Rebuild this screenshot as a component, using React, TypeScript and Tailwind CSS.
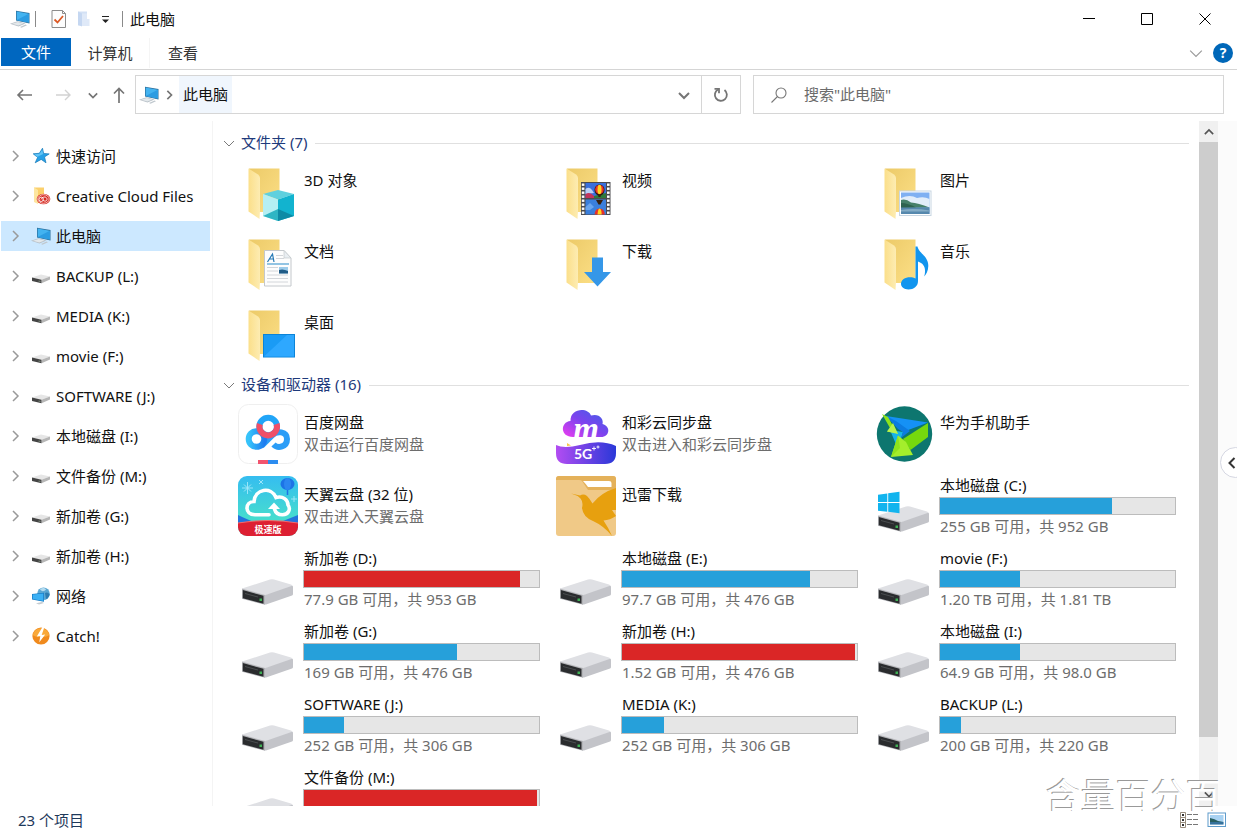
import React, { useState } from "react";

type IconProps = { className?: string };

/* ---------- small glyphs ---------- */

function Chevron({ dir, className = "" }: { dir: "right" | "down" | "up" | "left"; className?: string }) {
  const d = {
    right: "M4 1 L9 6 L4 11",
    down: "M1 4 L6 9 L11 4",
    up: "M1 8.500 L6 3.500 L11 8.500",
    left: "M8.500 1 L3.500 6 L8.500 11",
  }[dir];
  return (
    <svg viewBox="0 0 12 12" fill="none" stroke="currentColor" className={className} aria-hidden="true">
      <path d={d} />
    </svg>
  );
}

function PcIcon({ className = "" }: IconProps) {
  return (
    <svg viewBox="0 0 20 18" className={className} aria-hidden="true">
      <path d="M6 0.700 L19.500 3 V13.500 L6 10.500 Z" fill="#2a6f9c" />
      <path d="M6.700 1.600 L18.800 3.700 V12.500 L6.700 9.900 Z" fill="#43b3f0" />
      <path d="M6.700 9.900 L18.800 3.700 V12.500 Z" fill="#2c9ce2" />
      <path d="M0 13.700 L7.500 11.300 L15.500 13.400 L8.500 16.400 Z" fill="#b9c1c8" />
      <path d="M2 13.700 L7.700 12 L13.500 13.500 L8.300 15.500 Z" fill="#e3e8eb" />
      <path d="M10 17 L15.500 14.500 L17 15.200 L11.500 17.700 Z" fill="#c0c8ce" />
    </svg>
  );
}

function StarIcon({ className = "" }: IconProps) {
  return (
    <svg viewBox="0 0 20 18" className={className} aria-hidden="true">
      <path
        d="M11.500 1.200 L12.600 6.400 L18.200 6.900 L13.500 9.900 L15 15.800 L10.200 12.400 L4.200 15.800 L6.600 10.400 L2.200 6.800 L8.300 6.300 Z"
        fill="#27a0e6"
        stroke="#1478b8"
        strokeWidth="0.700"
      />
      <path d="M11.300 2.700 L12.100 7 L6 10.100 L3.500 7.300 L8.600 6.800 Z" fill="#5fc3f5" />
    </svg>
  );
}

function CloudFilesIcon({ className = "" }: IconProps) {
  return (
    <svg viewBox="0 0 20 18" className={className} aria-hidden="true">
      <path d="M3 0.500 H13 V16 H7 Z" fill="#fbd06c" />
      <path d="M3 0.500 L7 3 V17 L3 15 Z" fill="#fde6a0" />
      <ellipse cx="12.500" cy="12" rx="6.800" ry="5.300" fill="#d6281f" />
      <ellipse cx="12.500" cy="12" rx="5.700" ry="4.300" fill="none" stroke="#fff" strokeWidth="0.700" />
      <circle cx="10.200" cy="12.300" r="2.200" fill="none" stroke="#fff" strokeWidth="0.900" />
      <path d="M10 12.300 C12 9 16 9.500 16 12.300 C16 14.800 12.700 14.500 11.300 12.600" fill="none" stroke="#fff" strokeWidth="0.900" />
    </svg>
  );
}

function SmallDriveIcon({ className = "" }: IconProps) {
  return (
    <svg viewBox="0 0 20 18" className={className} aria-hidden="true">
      <path d="M1 10.500 L10 7.500 L19 9.500 L10.500 12.800 Z" fill="#e6e6e6" />
      <path d="M10.500 12.800 L19 9.500 V12.500 L10.500 16.300 Z" fill="#b6b6b6" />
      <path d="M1 10.500 L10.500 12.800 V16.300 L1 14 Z" fill="#444" />
      <path d="M7.500 13.600 L9.500 14.100 V15 L7.500 14.500 Z" fill="#7d8b7d" />
    </svg>
  );
}

function NetworkIcon({ className = "" }: IconProps) {
  return (
    <svg viewBox="0 0 20 18" className={className} aria-hidden="true">
      <circle cx="12.500" cy="6.800" r="6.300" fill="#5aa6d2" />
      <path d="M9 2 C12 0.500 14 1 15 2.500 C13 5 10 4.500 9 2 Z" fill="#b5dcf0" />
      <path d="M14 6 C16 4.500 18 6 18.700 7.500 C18 10 16.500 11.500 15 12 Z" fill="#2f7cb0" />
      <path d="M1 7 L13 5.800 V14.800 L1 12.500 Z" fill="#1779c2" />
      <path d="M1.700 7.600 L12.300 6.600 V13.900 L1.700 11.900 Z" fill="#3bb0f4" />
      <path d="M5 16.300 L11 15 L13 15.900 L8 17.500 Z" fill="#c4cbd0" />
    </svg>
  );
}

function CatchIcon({ className = "" }: IconProps) {
  return (
    <svg viewBox="0 0 20 18" className={className} aria-hidden="true">
      <circle cx="10" cy="9" r="8.600" fill="#f08a1d" />
      <path d="M1.600 8 A8.600 8.600 0 0 1 18.400 8 C14 11 6 11 1.600 8 Z" fill="#f9a93a" />
      <path d="M11.500 0 L5.800 9.600 L9.300 9 L8.300 15.300 L14.200 7.400 L10.700 8 L13.300 0.200 Z" fill="#fff" />
    </svg>
  );
}

/* ---------- 60px tile icons ---------- */

function Tile({ children }: { children: React.ReactNode }) {
  return (
    <svg viewBox="0 0 60 60" className="size-[60px] shrink-0" aria-hidden="true">
      {children}
    </svg>
  );
}

function FolderIcon({ children }: { children: React.ReactNode }) {
  return (
    <Tile>
      <defs>
        <linearGradient id="folderBack" x1="0" y1="0" x2="1" y2="1">
          <stop offset="0" stopColor="#ecca68" />
          <stop offset="1" stopColor="#fcdf86" />
        </linearGradient>
        <linearGradient id="folderFlap" x1="0" y1="0" x2="1" y2="0">
          <stop offset="0" stopColor="#fbdf8a" />
          <stop offset="1" stopColor="#fdecb2" />
        </linearGradient>
      </defs>
      <path d="M11 6.500 H41.500 V50 H20 Z" fill="url(#folderBack)" />
      <path d="M10.500 6.500 L20 12.500 Q22 14 22 16 V49 L21.500 57 L10.500 49.500 Z" fill="url(#folderFlap)" />
      {children}
    </Tile>
  );
}

const overlays: Record<string, React.ReactNode> = {
  objects: (
    <>
      <path d="M40 28 L56 32 L40 37.500 L25 32 Z" fill="#5fd0de" />
      <path d="M25 32 L40 37.500 V59 L25 54 Z" fill="#b5eff3" />
      <path d="M25 54 L40 47 V59 Z" fill="#2fb5c4" />
      <path d="M40 37.500 L56 32 V54 L40 59 Z" fill="#12b3cf" />
      <path d="M40 47 L56 54 L40 59 Z" fill="#0e8aa5" />
    </>
  ),
  video: (
    <>
      <rect x="25" y="20" width="29.500" height="33" fill="#4b4b4f" />
      {[21.5, 25.5, 29.5, 33.5, 37.5, 41.5, 45.5, 49.5].map((y) => (
        <React.Fragment key={y}>
          <rect x="25.800" y={y} width="2.600" height="2.400" fill="#fff" />
          <rect x="51" y={y} width="2.600" height="2.400" fill="#fff" />
        </React.Fragment>
      ))}
      <rect x="29.500" y="21" width="20.500" height="15" fill="#3a6fdc" />
      <rect x="29.500" y="37.500" width="20.500" height="15" fill="#3a7fdc" />
      <path d="M29.500 27 Q33 24 36 28 L38 31 L29.500 32 Z" fill="#b9cff5" />
      <path d="M29.500 32 Q34 29 38 34 L42 36 H29.500 Z" fill="#c2345b" />
      <path d="M38 34 L50 31 V36 H38 Z" fill="#2d7a3a" />
      <path d="M29.500 45 L34 41 L38 45 L34 48 L29.500 48 Z" fill="#6aa5ee" />
      <ellipse cx="43.500" cy="28" rx="5" ry="5.500" fill="#2b1a10" />
      <ellipse cx="43.500" cy="27.500" rx="4.300" ry="4.500" fill="#e8312a" />
      <ellipse cx="43.500" cy="27.500" rx="2" ry="4.700" fill="#ffd51f" />
      <path d="M42 32.500 H45 L44.500 35 H42.500 Z" fill="#38200e" />
      <path d="M40 38 H47 L44.500 42.500 H42.500 Z" fill="#38200e" />
      <path d="M38.500 52.500 Q39 46.500 43.500 46.500 Q48.500 46.500 48.800 52.500 Z" fill="#e8312a" />
      <path d="M41.500 52.500 Q42 46.500 43.500 46.500 Q45.500 46.500 45.700 52.500 Z" fill="#ffd51f" />
    </>
  ),
  pictures: (
    <>
      <rect x="25.500" y="29" width="31.500" height="24.500" fill="#fff" stroke="#c8d6e2" />
      <rect x="27" y="30.500" width="28.500" height="21.500" fill="#7fb0f2" />
      <path d="M27 36 Q36 32 43 36 Q50 34 55.500 37 V45 H27 Z" fill="#e1edfa" />
      <path d="M27 38 Q32 36.500 37 40.500 Q44 41 55.500 45.500 L27 46 Z" fill="#46806a" />
      <path d="M27 41 Q34 41 42 45.500 L27 46 Z" fill="#2e6350" />
      <rect x="27" y="45.500" width="28.500" height="6.500" fill="#5688ad" />
      <path d="M27 48 Q40 46 55.500 48.500 V49.500 H27 Z" fill="#84acc6" />
    </>
  ),
  documents: (
    <>
      <path d="M26.500 17.500 H46 L53 25 V53 H26.500 Z" fill="#fdfdfd" stroke="#c4c8cc" />
      <path d="M46 17.500 V25 H53 Z" fill="#e9eef2" stroke="#c4c8cc" strokeWidth="0.700" />
      <path d="M29.500 29 L34.500 21 L36 29 M31.500 26 H36" fill="none" stroke="#2478b5" strokeWidth="1.200" />
      <path d="M38 22.500 H45 M38 25.500 H46 M29 34.500 H40 M29 38 H40 M29 42 H50 M29 45.500 H50 M29 49 H50" stroke="#d3d6da" />
      <path d="M29 31 H51" stroke="#59a6d6" strokeWidth="1.300" />
      <rect x="41" y="34" width="9" height="6.500" fill="#9ccbea" />
      <path d="M41 37 Q45 35.500 50 38 V40.500 H41 Z" fill="#205c87" />
    </>
  ),
  downloads: <path d="M36 24.500 H47 V39 H55 L41.500 53.500 L28 39 H36 Z" fill="#3597e8" />,
  music: (
    <path
      d="M41.500 13.500 H43.500 C44.500 20 54.500 23 54.300 33 C54.200 38 52 41.500 50.200 43.500 C52.500 35 50 30.500 44 28.500 V48 C44 53.500 39.500 56.500 34.500 56.500 C30 56.500 27 54 27 50.800 C27 47 31 44.300 36 44.300 C38.200 44.300 40 44.800 41.500 45.500 Z"
      fill="#1295ee"
    />
  ),
  desktop: (
    <>
      <rect x="25.500" y="30.500" width="31" height="22.500" fill="#1a9bf5" stroke="#0c84d8" />
      <path d="M26 52.500 L49 31 H56 V52.500 Z" fill="#2ea8ff" />
    </>
  ),
};

function DriveIcon({ windows = false }: { windows?: boolean }) {
  return (
    <Tile>
      <path d="M4 39.500 L32 30.500 Q34 30 36 30.500 L53 35.500 Q55 36 55 38 L27 46.500 Z" fill="#dfe0e4" />
      <path d="M26 46.500 L53.500 37 Q55 36.500 55 38 V45 Q55 46 54 46.500 L28 55.500 H26 Z" fill="#c3c4c9" />
      <path d="M4 39.500 L27 46 V55.700 L4 49.800 Z" fill="#b4b5b9" />
      <path d="M4.800 41 L25.500 46.800 V54.700 L4.800 49.200 Z" fill="#2a2c2e" />
      <path d="M7 44 L20 47.500 V48.600 L7 45.100 Z" fill="#4b4e50" />
      <rect x="21.500" y="49.500" width="2.500" height="2.500" fill="#3fb155" />
      {windows && (
        <>
          <path d="M4 18.700 L13.300 17.400 V26 H4 Z M14.200 17.300 L25.500 15.700 V26 H14.200 Z" fill="#12b4ee" />
          <path d="M4 26.900 H13.300 V35.700 L4 34.800 Z M14.200 26.900 H25.500 V37.200 L14.200 35.800 Z" fill="#12b4ee" />
        </>
      )}
    </Tile>
  );
}

function BaiduIcon() {
  return (
    <Tile>
      <defs>
        <linearGradient id="bdRing" x1="0" y1="0" x2="1" y2="0">
          <stop offset="0" stopColor="#36c3fa" />
          <stop offset="1" stopColor="#1f7df0" />
        </linearGradient>
      </defs>
      <rect x="0.500" y="0.500" width="59" height="59" rx="10" fill="#fff" stroke="#efefef" />
      <g fill="none" strokeWidth="6">
        <path d="M23.500 42 L34 31.500 C39 26 49 27.500 49 35 C49 43 40 45 35.500 40.500" stroke="#2b9df7" />
        <circle cx="18.500" cy="35" r="7.800" stroke="url(#bdRing)" />
        <circle cx="30.200" cy="22.500" r="8.800" stroke="#21a5f8" />
        <path d="M21.800 20 A8.800 8.800 0 1 0 38.600 20" stroke="#ef5068" />
      </g>
      <path d="M20 56 H30 V60 H20 Z" fill="#f2546e" />
      <path d="M30 56 H40 V60 H30 Z" fill="#2b8cf0" />
    </Tile>
  );
}

function TianyiIcon() {
  return (
    <Tile>
      <defs>
        <linearGradient id="tySky" x1="0" y1="0" x2="0" y2="1">
          <stop offset="0" stopColor="#35bdf0" />
          <stop offset="0.700" stopColor="#46dccf" />
        </linearGradient>
        <clipPath id="tyClip">
          <rect width="60" height="60" rx="9" />
        </clipPath>
      </defs>
      <g clipPath="url(#tyClip)">
        <rect width="60" height="60" fill="url(#tySky)" />
        <path d="M0 39 Q12 45 20 47 L0 52 Z M60 39 Q50 43 40 47 L60 52 Z" fill="#2274dc" />
        <path d="M0 47 Q30 42 60 47 V60 H0 Z" fill="#dd1f32" />
        <path d="M0 47 Q30 42 60 47" stroke="#f66a6a" strokeWidth="1" fill="none" />
        <ellipse cx="49.500" cy="8" rx="7" ry="6" fill="#1c73e6" />
        <ellipse cx="49.500" cy="8" rx="3.500" ry="6" fill="#2b86f0" />
        <path d="M49.500 14 V19" stroke="#1c73e6" strokeWidth="1.500" />
        <path
          d="M9.500 6 V18 M4 12 H15 M6 8.500 L13 15.500 M13 8.500 L6 15.500 M21 4 L25 8 M25 4 L21 8 M56 20 V26 M53 23 H59"
          stroke="#a5e9fa"
          strokeWidth="0.900"
        />
        <path
          d="M31 38.800 H17 C6 38.500 7 25.500 16 25.500 C17 13 33 10 38 21.500 C45 19.500 50 24 50 29 C53 33 50.500 38.800 44.500 38.800 C40.500 38.800 37.500 37 36.500 33"
          fill="none"
          stroke="#fff"
          strokeWidth="3.600"
          strokeLinecap="round"
        />
        <path d="M30 33 L36 26.500 L42 33 Z" fill="#fff" />
        <text x="30" y="56.500" textAnchor="middle" fontSize="9" fontWeight="700" fill="#fff">
          极速版
        </text>
      </g>
    </Tile>
  );
}

function CaiyunIcon() {
  return (
    <Tile>
      <defs>
        <linearGradient id="cyCloud" x1="0" y1="1" x2="1" y2="0">
          <stop offset="0" stopColor="#ee3df0" />
          <stop offset="0.500" stopColor="#7c43ee" />
          <stop offset="1" stopColor="#3b63e6" />
        </linearGradient>
        <linearGradient id="cyBase" x1="0" y1="0" x2="1" y2="0">
          <stop offset="0" stopColor="#b34df2" />
          <stop offset="1" stopColor="#2a38d8" />
        </linearGradient>
      </defs>
      <path d="M17 33 C4 33 4 18 14.500 17 C14 4 32 3 35 11.500 C43 9 48 15 46.500 20 C55 22 54 33 45 33 Z" fill="url(#cyCloud)" />
      <path d="M0 41 Q8 45 24 41 Q45 35 60 42 V49 Q60 60 49 60 H11 Q0 60 0 49 Z" fill="url(#cyBase)" />
      <path d="M11 39 L15 41.500 L11 42 Z" fill="#f6c64a" />
      <text x="30" y="36" textAnchor="middle" fontSize="33" fontWeight="700" fontStyle="italic" fontFamily="Liberation Serif, serif" fill="#fff">
        m
      </text>
      <text x="18" y="55" fontSize="14" fontWeight="700" fontFamily="Lato, sans-serif" fill="#fff">
        5G
      </text>
      <path d="M38 42.500 V46.500 M36 44.500 H40 M42 41.500 V44.500 M40.500 43 H43.500" stroke="#fff" strokeWidth="0.900" />
    </Tile>
  );
}

function XunleiIcon() {
  return (
    <Tile>
      <defs>
        <clipPath id="xlClip">
          <rect width="60" height="60" rx="3" />
        </clipPath>
      </defs>
      <g clipPath="url(#xlClip)">
        <rect width="60" height="60" fill="#f0c987" />
        <path d="M0 0 H60 V14 H32 L26 5 Q25 4 23 4 H0 Z" fill="#e4b15a" />
        <path d="M27 5 H53 Q55.500 5 55.500 7 V11 H32 Q30 8 27 5 Z" fill="#fff" />
        <path
          d="M15 17.500 L24 19.500 Q27.500 17.500 31 20 Q34 23 36.500 27.500 Q45 16.500 60 12 V34 H56 L60 40 Q54 44 47.500 44.500 Q52 51 56 60 Q48 50 37 45 Q27 41 26 32 Q27.500 26 24.500 22.500 Q21 19 15 17.500 Z"
          fill="#e7a00f"
        />
      </g>
    </Tile>
  );
}

function HuaweiIcon() {
  return (
    <Tile>
      <circle cx="30.500" cy="30" r="27.700" fill="#0d766f" />
      <path d="M12 12 L54 18.500 L29 28 Z" fill="#1591f5" />
      <path d="M16 26 L29 28 L24 45 Z" fill="#17b4e8" />
      <path d="M12 12 L24 25 L29 28 L27 34 L36 27 L22 17 Z" fill="#0c7be0" />
      <path d="M8 10 L14 13 L19 22 L24 29.500 L13 27.500 L16 24 Z" fill="#8fe31c" />
      <path d="M19 19 L24 30 L13 27.500 Z" fill="#b9f24f" />
      <path d="M54 19 L54 33 L36.500 46 L29 35 Z" fill="#76d90d" />
      <path d="M24 31.500 L32 38 L39 51 L17 53 Z" fill="#a4ee2c" />
      <path d="M17 53 L24 31.500 L26 44 Z" fill="#8fe31c" />
    </Tile>
  );
}

/* ---------- data ---------- */

const navItems = [
  { label: "快速访问", Icon: StarIcon },
  { label: "Creative Cloud Files", Icon: CloudFilesIcon },
  { label: "此电脑", Icon: PcIcon },
  { label: "BACKUP (L:)", Icon: SmallDriveIcon },
  { label: "MEDIA (K:)", Icon: SmallDriveIcon },
  { label: "movie (F:)", Icon: SmallDriveIcon },
  { label: "SOFTWARE (J:)", Icon: SmallDriveIcon },
  { label: "本地磁盘 (I:)", Icon: SmallDriveIcon },
  { label: "文件备份 (M:)", Icon: SmallDriveIcon },
  { label: "新加卷 (G:)", Icon: SmallDriveIcon },
  { label: "新加卷 (H:)", Icon: SmallDriveIcon },
  { label: "网络", Icon: NetworkIcon },
  { label: "Catch!", Icon: CatchIcon },
];

const folders = [
  { label: "3D 对象", kind: "objects" },
  { label: "视频", kind: "video" },
  { label: "图片", kind: "pictures" },
  { label: "文档", kind: "documents" },
  { label: "下载", kind: "downloads" },
  { label: "音乐", kind: "music" },
  { label: "桌面", kind: "desktop" },
];

const apps = [
  { label: "百度网盘", note: "双击运行百度网盘", Icon: BaiduIcon },
  { label: "和彩云同步盘", note: "双击进入和彩云同步盘", Icon: CaiyunIcon },
  { label: "华为手机助手", note: "", Icon: HuaweiIcon },
  { label: "天翼云盘 (32 位)", note: "双击进入天翼云盘", Icon: TianyiIcon },
  { label: "迅雷下载", note: "", Icon: XunleiIcon },
];

const drives = [
  { label: "本地磁盘 (C:)", note: "255 GB 可用，共 952 GB", used: 73, windows: true },
  { label: "新加卷 (D:)", note: "77.9 GB 可用，共 953 GB", used: 92 },
  { label: "本地磁盘 (E:)", note: "97.7 GB 可用，共 476 GB", used: 80 },
  { label: "movie (F:)", note: "1.20 TB 可用，共 1.81 TB", used: 34 },
  { label: "新加卷 (G:)", note: "169 GB 可用，共 476 GB", used: 65 },
  { label: "新加卷 (H:)", note: "1.52 GB 可用，共 476 GB", used: 99 },
  { label: "本地磁盘 (I:)", note: "64.9 GB 可用，共 98.0 GB", used: 34 },
  { label: "SOFTWARE (J:)", note: "252 GB 可用，共 306 GB", used: 17 },
  { label: "MEDIA (K:)", note: "252 GB 可用，共 306 GB", used: 18 },
  { label: "BACKUP (L:)", note: "200 GB 可用，共 220 GB", used: 9 },
  { label: "文件备份 (M:)", note: "", used: 99 },
];

/* ---------- sections ---------- */

function TitleBar() {
  return (
    <header className="flex h-[38px] shrink-0 items-center pl-2.5">
      <PcIcon className="h-[18px] w-5" />
      <span className="ml-[5px] h-4 w-px bg-[#8a8a8a]" />
      <button aria-label="属性" className="ml-[15px]">
        <svg viewBox="0 0 16 18" className="h-[18px] w-4">
          <path d="M1 0.500 H11.500 L14.500 3.500 V17.500 H1 Z" fill="#fdfdfd" stroke="#8c8c8c" />
          <path d="M11.500 0.500 V3.500 H14.500" fill="none" stroke="#8c8c8c" />
          <path d="M3.500 9.500 L6.500 12.500 L12 6" fill="none" stroke="#dc5a26" strokeWidth="1.800" />
        </svg>
      </button>
      <button aria-label="新建文件夹" className="ml-2.5">
        <svg viewBox="0 0 14 18" className="h-[18px] w-3.5">
          <path d="M1 1.500 H10 V15.500 H1 Z" fill="#d3e1f5" />
          <path d="M5 3.500 H10 V9 H12.500 V16 H5 Z" fill="#dfe9f8" />
          <path d="M1 1.500 L5 3.500 V16.500 L1 15 Z" fill="#c5d7f1" />
        </svg>
      </button>
      <button aria-label="自定义快速访问工具栏" className="ml-2.5">
        <svg viewBox="0 0 9 9" className="size-[9px]">
          <path d="M1 1.500 H8" stroke="#222" />
          <path d="M1 4.500 H8 L4.500 8 Z" fill="#222" />
        </svg>
      </button>
      <span className="ml-3 h-4 w-px bg-[#8a8a8a]" />
      <h1 className="ml-[7px] flex-1">此电脑</h1>
      <div className="flex pr-[3px]">
        <button aria-label="最小化" className="flex h-[38px] w-[58px] items-center justify-center">
          <svg viewBox="0 0 14 14" className="size-3.5" stroke="#000">
            <path d="M1 6.500 H13" />
          </svg>
        </button>
        <button aria-label="最大化" className="flex h-[38px] w-[58px] items-center justify-center">
          <svg viewBox="0 0 14 14" className="size-3.5" stroke="#000" fill="none">
            <path d="M1.500 1.500 H12.500 V12.500 H1.500 Z" />
          </svg>
        </button>
        <button aria-label="关闭" className="flex h-[38px] w-[58px] items-center justify-center">
          <svg viewBox="0 0 14 14" className="size-3.5" stroke="#000">
            <path d="M1.500 1.500 L12.500 12.500 M12.500 1.500 L1.500 12.500" />
          </svg>
        </button>
      </div>
    </header>
  );
}

function Ribbon() {
  return (
    <div className="flex h-8 shrink-0 items-start border-b border-[#d5d5d5] pl-px">
      <button className="h-7 w-[70px] bg-[#0067c0] text-white">文件</button>
      <button className="h-[30px] w-[79px] border-r border-[#f5f5f5] text-[#333]">计算机</button>
      <button className="h-[30px] w-[66px] text-[#333]">查看</button>
      <div className="flex h-[30px] flex-1 items-center justify-end gap-2.5 pr-1 text-[#9a9a9a]">
        <button aria-label="展开功能区">
          <Chevron dir="down" className="size-3.5" />
        </button>
        <button aria-label="帮助" className="size-5 rounded-full bg-[#0067b8] text-sm leading-5 font-bold text-white">
          ?
        </button>
      </div>
    </div>
  );
}

function AddressBar() {
  const [query, setQuery] = useState("");
  return (
    <div className="flex shrink-0 pt-[5px] pr-[13px]">
      <div className="flex h-[39px] w-[135px] shrink-0 items-center pl-4 text-[#757575]">
        <button aria-label="后退">
          <svg viewBox="0 0 18 14" className="h-3.5 w-[18px]" fill="none" stroke="currentColor" strokeWidth="1.600">
            <path d="M16 7 H2 M7 2 L2 7 L7 12" />
          </svg>
        </button>
        <button aria-label="前进" className="ml-5 text-[#d2d2d2]">
          <svg viewBox="0 0 18 14" className="h-3.5 w-[18px]" fill="none" stroke="currentColor" strokeWidth="1.400">
            <path d="M2 7 H16 M11 2 L16 7 L11 12" />
          </svg>
        </button>
        <button aria-label="最近浏览的位置" className="ml-4">
          <Chevron dir="down" className="size-2.5 stroke-2" />
        </button>
        <button aria-label="上移" className="ml-3.5">
          <svg viewBox="0 0 14 18" className="h-[18px] w-3.5" fill="none" stroke="currentColor" strokeWidth="1.700">
            <path d="M7 17 V2.500 M2 7.500 L7 2.500 L12 7.500" />
          </svg>
        </button>
      </div>
      <div className="flex h-[39px] flex-1 items-stretch border border-[#d6d6d6]">
        <div className="flex items-center pl-[3px]">
          <PcIcon className="h-[18px] w-5" />
        </div>
        <div className="flex w-5 items-center justify-center text-[#757575]">
          <Chevron dir="right" className="size-2.5 stroke-2" />
        </div>
        <button className="w-[53px] bg-[#f0f6fd] pb-0.5">此电脑</button>
        <span className="flex-1" />
        <button aria-label="展开地址" className="flex w-9 items-center justify-center border-r border-[#d6d6d6] text-[#757575]">
          <Chevron dir="down" className="size-3 stroke-2" />
        </button>
        <button aria-label="刷新" className="flex w-[38px] items-center justify-center text-[#757575]">
          <svg viewBox="0 0 16 16" className="size-4" fill="none" stroke="currentColor" strokeWidth="1.800">
            <path d="M11.500 3 A6 6 0 1 1 5 2.500" />
            <path d="M1.500 1.800 H6 V6.300" />
          </svg>
        </button>
      </div>
      <div className="ml-3 flex h-[39px] w-[471px] items-center border border-[#d6d6d6] pl-4">
        <svg viewBox="0 0 18 18" className="size-[18px] shrink-0" fill="none" stroke="#777" strokeWidth="1.100">
          <circle cx="11" cy="7" r="5" />
          <path d="M7.500 10.500 L1.500 16.500" />
        </svg>
        <input
          type="text"
          aria-label="搜索"
          value={query}
          onChange={(e) => setQuery(e.target.value)}
          placeholder={'搜索"此电脑"'}
          className="ml-4 h-9 min-w-0 flex-1 bg-transparent pb-0.5 outline-none placeholder:text-[#6b6b6b]"
        />
      </div>
    </div>
  );
}

function Sidebar() {
  return (
    <nav className="w-[213px] shrink-0 border-r border-[#f4f4f4] pt-5">
      <ul className="flex flex-col gap-2.5 pr-0.5 pl-px">
        {navItems.map(({ label, Icon }) => (
          <li key={label}>
            <button
              aria-current={label === "此电脑"}
              className="flex h-[30px] w-full items-center pl-2 text-left aria-[current=true]:bg-[#cce8ff]"
            >
              <Chevron dir="right" className="size-3 stroke-[1.5] text-[#9a9a9a]" />
              <Icon className="ml-2.5 h-[18px] w-5" />
              <span className="ml-[5px] whitespace-nowrap">{label}</span>
            </button>
          </li>
        ))}
      </ul>
    </nav>
  );
}

function GroupHeading({ children }: { children: React.ReactNode }) {
  return (
    <h2 className="flex h-5 items-center pr-2.5 pl-2.5 text-[#1e3a7b]">
      <Chevron dir="down" className="size-3 text-[#7a7a7a]" />
      <span className="ml-1.5 pb-0.5">{children}</span>
      <span className="ml-2 h-px flex-1 bg-[#e0e0e0]" />
    </h2>
  );
}

const gridClass = "mt-[9px] grid grid-cols-[repeat(auto-fill,318px)] pl-[25px]";

function FileArea() {
  return (
    <main className="min-w-0 flex-1 overflow-hidden pt-3">
      <GroupHeading>文件夹 (7)</GroupHeading>
      <ul className={gridClass}>
        {folders.map((f) => (
          <li key={f.label} className="flex h-[71px]">
            <FolderIcon>{overlays[f.kind]}</FolderIcon>
            <span className="ml-1.5 pt-2">{f.label}</span>
          </li>
        ))}
      </ul>
      <GroupHeading>设备和驱动器 (16)</GroupHeading>
      <ul className={gridClass}>
        {apps.map(({ label, note, Icon }) => (
          <li key={label} className="flex h-[72px]">
            <Icon />
            <div className="ml-1.5 pt-2">
              <p>{label}</p>
              {note && <p className="mt-0.5 text-[#6d6d6d]">{note}</p>}
            </div>
          </li>
        ))}
        {drives.map((d) => (
          <li key={d.label} className="flex h-[73px]">
            <DriveIcon windows={d.windows} />
            <div className="ml-[5px] w-[237px]">
              <p className="pl-px leading-[18px]">{d.label}</p>
              <div
                role="meter"
                aria-label={d.label}
                aria-valuenow={d.used}
                aria-valuemin={0}
                aria-valuemax={100}
                className="mt-[3px] h-[18px] border border-[#bcbcbc] bg-[#e6e6e6]"
              >
                <div className={d.used > 90 ? "h-full bg-[#da2626]" : "h-full bg-[#26a0da]"} style={{ width: `${d.used}%` }} />
              </div>
              {d.note && <p className="mt-px pl-px text-[#6d6d6d]">{d.note}</p>}
            </div>
          </li>
        ))}
      </ul>
    </main>
  );
}

function ScrollBar() {
  return (
    <div className="flex w-[19px] shrink-0 flex-col bg-[#f0f0f0]">
      <button aria-label="向上滚动" className="flex h-[21px] items-center justify-center text-[#555]">
        <Chevron dir="up" className="size-2.5 stroke-2" />
      </button>
      <div className="flex min-h-0 flex-1 flex-col">
        <div className="h-[93%] bg-[#cdcdcd]" />
      </div>
      <button aria-label="向下滚动" className="flex h-6 items-center justify-center text-[#555]">
        <Chevron dir="down" className="size-2.5 stroke-2" />
      </button>
    </div>
  );
}

function StatusBar() {
  return (
    <footer className="flex h-[30px] shrink-0 items-center pr-2.5 pb-0.5 pl-[18px] text-[#1e395b]">
      <p className="flex-1">23 个项目</p>
      <button aria-label="详细信息">
        <svg viewBox="0 0 20 16" className="h-4 w-5" fill="none">
          <path d="M1.500 0.500 H6.500 V15.500 H1.500 Z M1.500 5.500 H6.500 M1.500 10.500 H6.500" stroke="#9a8f80" />
          <path d="M3 3 H5 M3 8 H5 M3 13 H5" stroke="#333" strokeWidth="2" />
          <path d="M8 2.500 H19 M8 7.500 H19 M8 12.500 H19" stroke="#777" strokeDasharray="5 1" />
        </svg>
      </button>
      <button aria-label="大图标" className="ml-2">
        <svg viewBox="0 0 20 16" className="h-4 w-5">
          <rect x="1" y="1" width="17.500" height="13.500" fill="#fff" stroke="#5f9ccb" />
          <rect x="3" y="3" width="13.500" height="9.500" fill="#a8d2f2" />
          <path d="M3 6 Q8 7 11 9 L16.500 10 H3 Z" fill="#285f60" />
          <rect x="3" y="10" width="13.500" height="2.500" fill="#35719b" />
        </svg>
      </button>
    </footer>
  );
}

export default function App() {
  return (
    <div className="relative flex h-screen flex-col overflow-hidden bg-white font-['Noto_Sans','Noto_Sans_CJK_SC',sans-serif] text-[15px] leading-5 text-[#111]">
      <TitleBar />
      <Ribbon />
      <AddressBar />
      <div className="mt-[7px] flex min-h-0 flex-1">
        <Sidebar />
        <FileArea />
        <ScrollBar />
        <div className="w-[19px] shrink-0 bg-[#fbfbfb]" />
      </div>
      <StatusBar />
      <button
        aria-label="展开侧栏"
        className="absolute top-[447px] -right-3.5 flex size-[31px] items-center rounded-full border border-[#d5d7e2] bg-white pl-[5px] text-[#333]"
      >
        <Chevron dir="left" className="size-3 stroke-2" />
      </button>
      <p className="pointer-events-none absolute right-4 bottom-5 text-[35px] leading-10 text-white [text-shadow:-1px_-1px_0_#999]">
        含量百分百
      </p>
    </div>
  );
}
